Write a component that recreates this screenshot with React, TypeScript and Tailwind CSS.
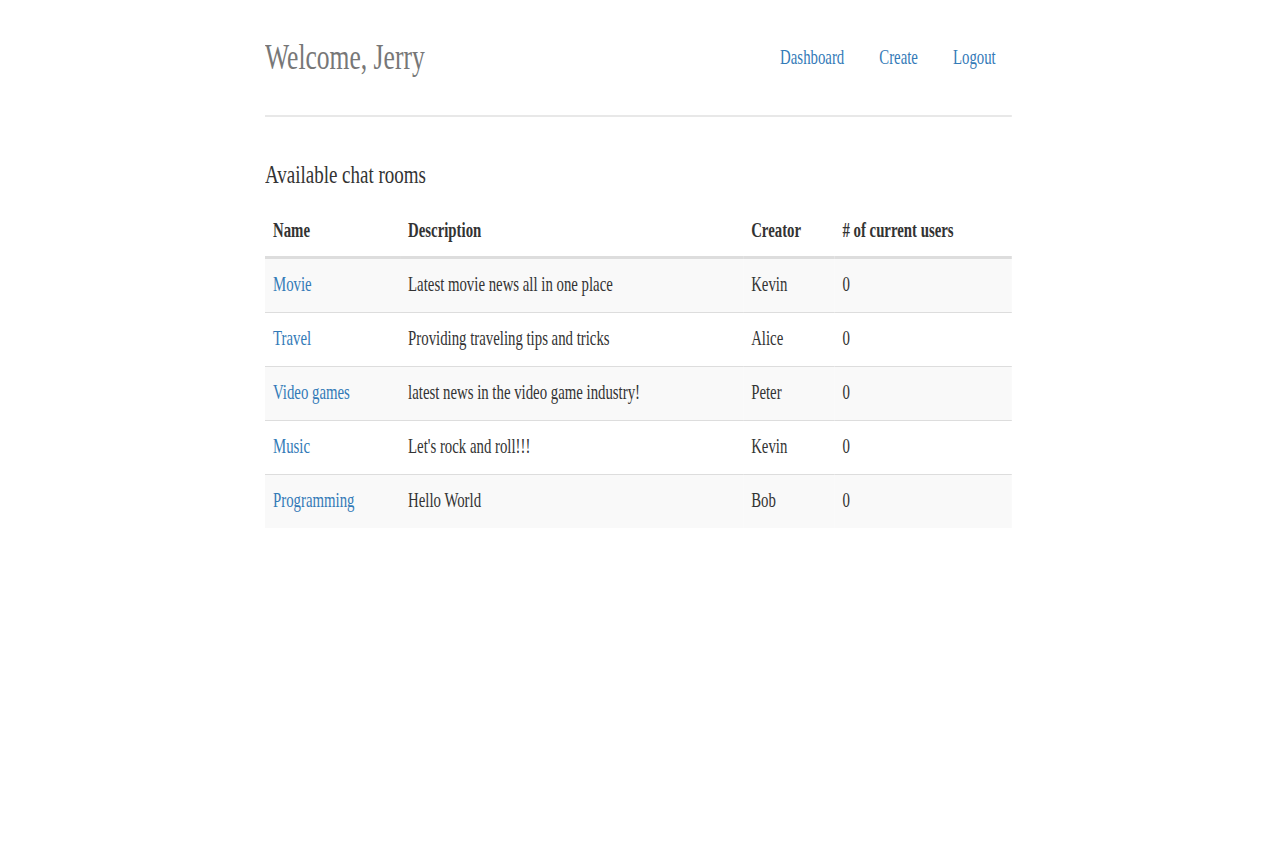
import React from "react";

const ROOMS = [
  { name: "Movie", description: "Latest movie news all in one place", creator: "Kevin", users: 0 },
  { name: "Travel", description: "Providing traveling tips and tricks", creator: "Alice", users: 0 },
  { name: "Video games", description: "latest news in the video game industry!", creator: "Peter", users: 0 },
  { name: "Music", description: "Let's rock and roll!!!", creator: "Kevin", users: 0 },
  { name: "Programming", description: "Hello World", creator: "Bob", users: 0 },
];

const NAV = ["Dashboard", "Create", "Logout"];

export default function App() {
  return (
    <div className="w-full min-h-[853px] overflow-hidden bg-white font-['Liberation_Serif',serif] text-[#333]">
      {/* page is drawn narrow: everything squeezed horizontally */}
      <div className="ml-[265px] w-[1023px] origin-left scale-x-[0.73]">
        {/* Header */}
        <div className="h-[117px] border-b-2 border-[#e8e8e8] flex items-start justify-between">
          <h3 className="mt-[39px] text-[35px] leading-[38px] font-normal text-[#777]">Welcome, Jerry</h3>
          <ul className="mt-[43px] flex gap-[4px]">
            {NAV.map((item) => (
              <li key={item}>
                <a href="#" className="block px-[22px] text-[20.3px] leading-[29px] text-[#337ab7]">
                  {item}
                </a>
              </li>
            ))}
          </ul>
        </div>

        {/* Rooms */}
        <h4 className="mt-[44px] text-[26px] leading-[28px] font-normal">Available chat rooms</h4>

        <table className="mt-[14px] w-full table-fixed border-collapse text-[20.3px] leading-[29px]">
          <thead>
            <tr className="border-b-[3px] border-[#ddd]">
              <th className="w-[185px] px-[11px] pt-[13px] pb-[11px] text-left font-bold">Name</th>
              <th className="w-[470px] px-[11px] pt-[13px] pb-[11px] text-left font-bold">Description</th>
              <th className="w-[125px] px-[11px] pt-[13px] pb-[11px] text-left font-bold">Creator</th>
              <th className="px-[11px] pt-[13px] pb-[11px] text-left font-bold"># of current users</th>
            </tr>
          </thead>
          <tbody>
            {ROOMS.map((room, i) => (
              <tr
                key={room.name}
                className={`${i > 0 ? "border-t border-[#ddd]" : ""} ${i % 2 === 0 ? "bg-[#f9f9f9]" : "bg-white"}`}
              >
                <td className="px-[11px] pt-[11px] pb-[13px]">
                  <a href="#" className="text-[#337ab7]">{room.name}</a>
                </td>
                <td className="px-[11px] pt-[11px] pb-[13px]">{room.description}</td>
                <td className="px-[11px] pt-[11px] pb-[13px]">{room.creator}</td>
                <td className="px-[11px] pt-[11px] pb-[13px]">{room.users}</td>
              </tr>
            ))}
          </tbody>
        </table>
      </div>
    </div>
  );
}
